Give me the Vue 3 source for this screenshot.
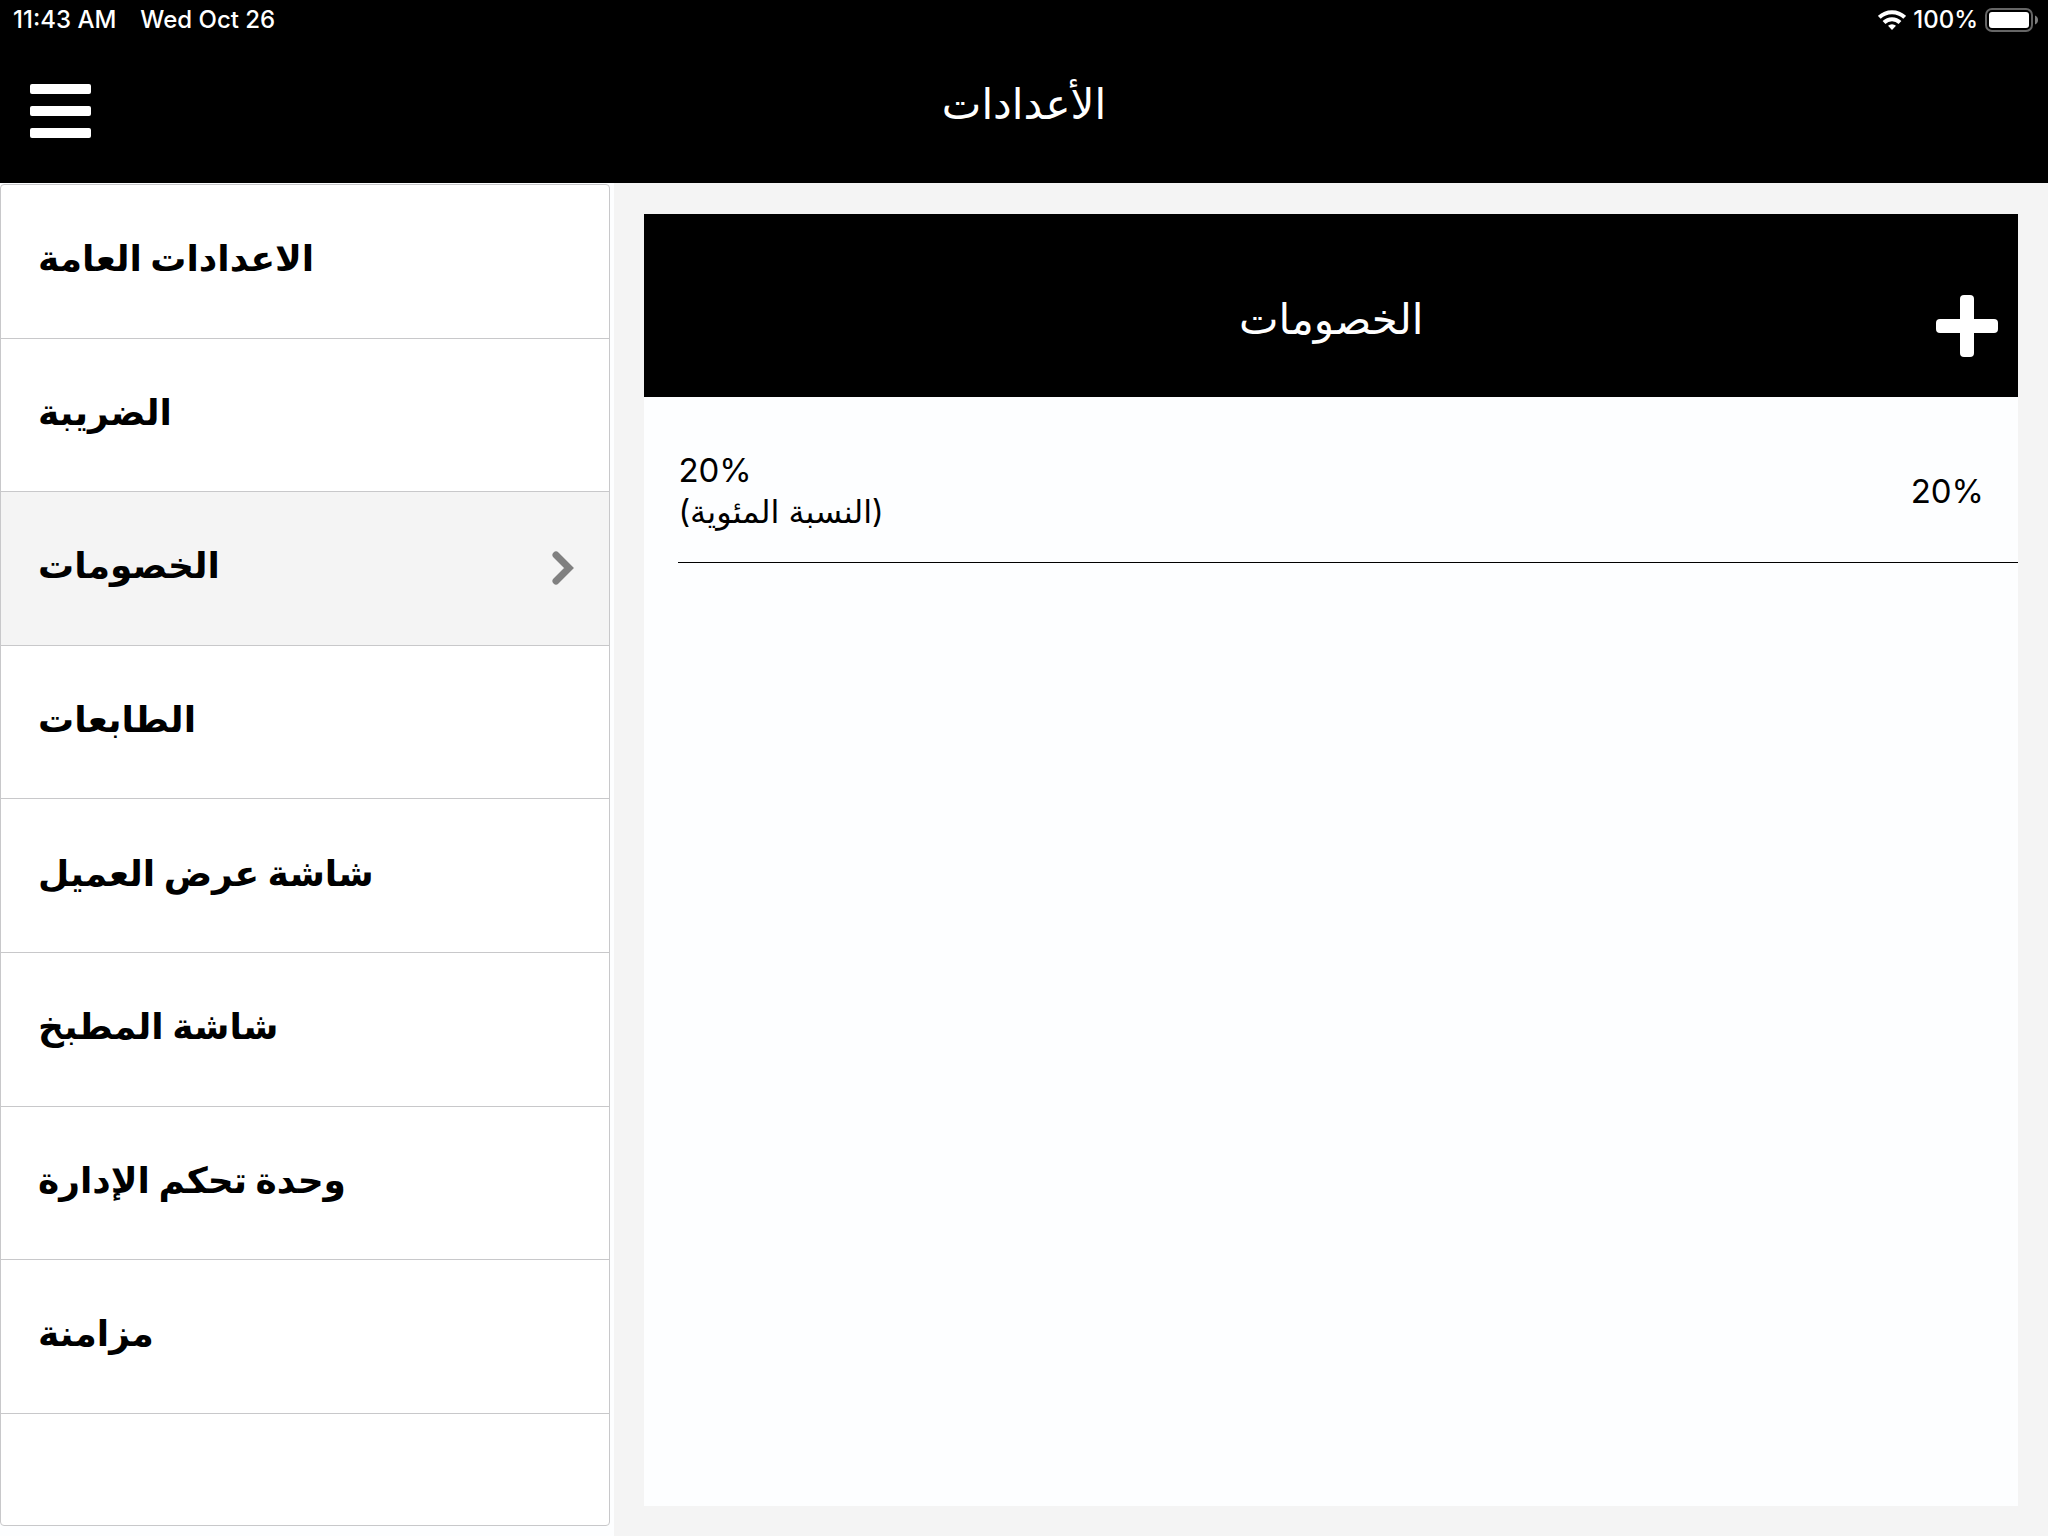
<template>
  <div class="screen">
    <header class="top-bar">
      <div class="status">
        <div class="status-side">
          <span>11:43 AM</span>
          <span>Wed Oct 26</span>
        </div>
        <div class="status-side right">
          <svg class="wifi" viewBox="0 0 28 20" aria-hidden="true">
            <g fill="none" stroke="#fff" stroke-width="4">
              <path d="M1.3 7.4a18 18 0 0 1 25.4 0" />
              <path d="M6 12.5a11.3 11.3 0 0 1 16 0" />
            </g>
            <path d="M14 20l-4-4.2a5.8 5.8 0 0 1 8 0z" fill="#fff" />
          </svg>
          <span>100%</span>
          <svg class="battery" viewBox="0 0 53 24" aria-hidden="true">
            <rect x="1" y="1" width="46" height="22" rx="6" fill="none" stroke="#666" stroke-width="2" />
            <rect x="4" y="4" width="40" height="16" rx="3" fill="#fff" />
            <path d="M50 7.500c4 1.500 4 7.500 0 9z" fill="#808080" />
          </svg>
        </div>
      </div>
      <div class="title-bar">
        <button class="icon-btn menu-btn" type="button" aria-label="القائمة">
          <svg viewBox="0 0 61 54" fill="#fff">
            <rect width="61" height="10" rx="2" />
            <rect y="22" width="61" height="10" rx="2" />
            <rect y="44" width="61" height="10" rx="2" />
          </svg>
        </button>
        <h1 class="title" dir="rtl">الأعدادات</h1>
        <span></span>
      </div>
    </header>

    <main class="content">
      <div class="side">
        <nav class="menu">
          <button
            v-for="item in items"
            :key="item.id"
            class="menu-item"
            :class="{ active: current === item.id }"
            type="button"
            @click="current = item.id"
          >
            <span class="menu-label" dir="rtl">{{ item.label }}</span>
            <svg v-if="current === item.id" class="chevron" viewBox="0 0 22 34" aria-hidden="true">
              <path d="M4 4l13 13L4 30" fill="none" stroke="#808080" stroke-width="7" stroke-linecap="round" />
            </svg>
          </button>
        </nav>
      </div>

      <div class="detail">
        <section class="panel">
          <div class="panel-head">
            <span></span>
            <h2 class="title" dir="rtl">الخصومات</h2>
            <button class="icon-btn add-btn" type="button" aria-label="إضافة">
              <svg viewBox="0 0 62 62" fill="#fff">
                <rect x="24" width="14" height="62" rx="4" />
                <rect y="24" width="62" height="14" rx="4" />
              </svg>
            </button>
          </div>

          <ul class="discounts">
            <li v-for="d in discounts" :key="d.name" class="discount">
              <div class="discount-info">
                <span>{{ d.name }}</span>
                <span class="discount-type" dir="rtl">({{ d.type }})</span>
              </div>
              <span>{{ d.value }}</span>
            </li>
          </ul>
        </section>
      </div>
    </main>
  </div>
</template>

<script setup>
import { ref } from 'vue'

const items = [
  { id: 'general', label: 'الاعدادات العامة' },
  { id: 'tax', label: 'الضريبة' },
  { id: 'discounts', label: 'الخصومات' },
  { id: 'printers', label: 'الطابعات' },
  { id: 'customer', label: 'شاشة عرض العميل' },
  { id: 'kitchen', label: 'شاشة المطبخ' },
  { id: 'admin', label: 'وحدة تحكم الإدارة' },
  { id: 'sync', label: 'مزامنة' },
]

const discounts = [{ name: '20%', type: 'النسبة المئوية', value: '20%' }]

const current = ref('discounts')
</script>

<style>
body {
  margin: 0;
  background: #fdfeff;
}
</style>

<style scoped>
.screen {
  min-height: 100vh;
  display: flex;
  flex-direction: column;
  font-family: Inter, 'DejaVu Sans', sans-serif;
  color: #000;
}

.top-bar {
  background: #000;
  color: #fff;
}

/* status */
.status {
  display: flex;
  justify-content: space-between;
  height: 39px;
  padding: 0 10px 0 13px;
  font-size: 24px;
  font-weight: 500;
}

.status-side {
  display: flex;
  align-items: center;
  gap: 24px;
}

.status-side.right {
  gap: 7px;
}

.wifi {
  width: 28px;
  height: 20px;
}

.battery {
  width: 53px;
  height: 24px;
}

/* title bars */
.title-bar,
.panel-head {
  display: grid;
  grid-template-columns: 1fr auto 1fr;
  align-items: center;
}

.title-bar {
  height: 144px;
  padding: 0 30px;
  box-sizing: border-box;
}

.title {
  margin: 0;
  padding-bottom: 14px;
  font-size: 42px;
  line-height: 60px;
  font-weight: 400;
}

.icon-btn {
  padding: 0;
  border: none;
  background: transparent;
  cursor: pointer;
}

.icon-btn svg {
  display: block;
  width: 100%;
}

.menu-btn {
  width: 61px;
}

.add-btn {
  width: 62px;
  justify-self: end;
}

.content {
  flex: 1;
  display: grid;
  grid-template-columns: 30% 1fr;
}

/* menu */
.side {
  display: flex;
  padding: 1px 4px 10px 0;
}

.menu {
  flex: 1;
  border: 1px solid #c8c8ca;
  border-radius: 4px;
  background: #fff;
  overflow: hidden;
}

.menu-item {
  display: flex;
  align-items: center;
  justify-content: space-between;
  width: 100%;
  height: 10vh;
  padding: 0 35px 0 37px;
  border: none;
  border-bottom: 1px solid #c8c8ca;
  background: transparent;
  color: #000;
  font-family: inherit;
  font-size: 36px;
  font-weight: 700;
  cursor: pointer;
}

.menu-item.active {
  background: #f4f4f4;
}

.menu-label {
  padding-bottom: 6px;
}

.chevron {
  width: 22px;
  height: 34px;
}

/* detail */
.detail {
  display: flex;
  padding: 31px 30px 30px;
  background: #f4f4f4;
}

.panel {
  flex: 1;
  background: #fdfeff;
}

.panel-head {
  height: 183px;
  padding: 40px 20px 0;
  box-sizing: border-box;
  background: #000;
  color: #fff;
}

.discounts {
  margin: 0;
  padding: 0 0 0 34px;
  list-style: none;
}

.discount {
  display: flex;
  align-items: center;
  justify-content: space-between;
  height: 166px;
  padding: 22px 34px 0 0;
  box-sizing: border-box;
  border-bottom: 1px solid #000;
  font-size: 33px;
}

.discount-info {
  display: flex;
  flex-direction: column;
  align-items: flex-start;
  line-height: 42px;
}

.discount-type {
  font-size: 32px;
}
</style>
